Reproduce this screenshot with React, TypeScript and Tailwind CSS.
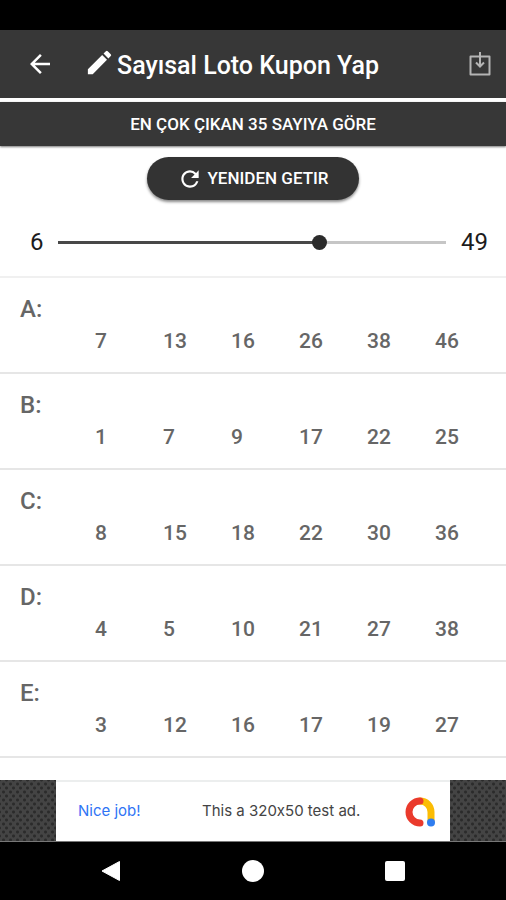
import { useState } from "react";
import { MdArrowBack, MdEdit, MdRefresh } from "react-icons/md";

const MIN = 6;
const MAX = 49;

const coupons = [
  { label: "A", numbers: [7, 13, 16, 26, 38, 46] },
  { label: "B", numbers: [1, 7, 9, 17, 22, 25] },
  { label: "C", numbers: [8, 15, 18, 22, 30, 36] },
  { label: "D", numbers: [4, 5, 10, 21, 27, 38] },
  { label: "E", numbers: [3, 12, 16, 17, 19, 27] },
];

function AppBar() {
  return (
    <header className="flex h-17 items-center bg-[#373737] pr-[14px] pl-6 text-white">
      <button type="button" aria-label="Geri" className="flex size-8 items-center justify-center">
        <MdArrowBack size={30} />
      </button>
      <h1 className="ml-7 flex flex-1 items-center gap-[2px] text-[25px] leading-9 font-medium">
        <MdEdit size={31} className="mb-1" aria-hidden="true" />
        <span className="mt-1">Sayısal Loto Kupon Yap</span>
      </h1>
      <button type="button" aria-label="Kaydet" className="text-[#b4b4b4]">
        <svg width="24" height="26" viewBox="0 0 24 26" fill="none" stroke="currentColor" strokeWidth="2">
          <path d="M2.500 5.500h19v18h-19z" strokeLinejoin="round" />
          <path d="M12 1v14M8 11.500l4 4 4-4" />
        </svg>
      </button>
    </header>
  );
}

function RangePicker({ value, onChange }: { value: number; onChange: (n: number) => void }) {
  const pct = ((value - MIN) / (MAX - MIN)) * 100;
  return (
    <div className="flex items-center border-b-2 border-[#f0f0f0] px-[18px] pt-6 pb-4 text-2xl leading-9 text-[#1c1c1c]">
      <label htmlFor="range" className="w-[33px] pl-3">{MIN}</label>
      <input
        id="range"
        type="range"
        min={MIN}
        max={MAX}
        value={value}
        onChange={(e) => onChange(Number(e.target.value))}
        className="h-4 min-w-0 flex-1 appearance-none bg-transparent bg-[length:calc(100%_-_14px)_3px] bg-center bg-no-repeat [&::-webkit-slider-thumb]:size-[15px] [&::-webkit-slider-thumb]:appearance-none [&::-webkit-slider-thumb]:rounded-full [&::-webkit-slider-thumb]:bg-[#2b2b2b]"
        style={{ backgroundImage: `linear-gradient(to right, #484848 ${pct}%, #c6c6c6 ${pct}%)` }}
      />
      <output htmlFor="range" className="w-[35px] pl-2">{MAX}</output>
    </div>
  );
}

function AdMobLogo() {
  return (
    <svg width="32" height="32" viewBox="0 0 32 32" fill="none" strokeWidth="7" strokeLinecap="round" aria-hidden="true">
      <path d="M16 5c6.200 0 11 4.800 11 11v9" stroke="#fbbc04" />
      <path d="M16 5a11 11 0 1 0 0 22" stroke="#ea3a2c" />
      <circle cx="27" cy="26.500" r="4" fill="#2f7df0" />
    </svg>
  );
}

function AdBanner() {
  return (
    <aside className="flex h-[62px] justify-center border-b border-[#777] bg-[#444] bg-[radial-gradient(circle,#2b2b2b_1px,transparent_2px),radial-gradient(circle,#2b2b2b_1px,transparent_2px)] bg-[length:7px_8px] bg-[position:0_0,3px_4px]">
      <a
        href="#ad"
        className="flex w-[394px] items-center border-t-2 border-[#eceeee] bg-white pr-[14px] pl-[22px] font-['Inter','Roboto',sans-serif] text-[15px] [font-feature-settings:'calt'_0]"
      >
        <span className="w-31 text-[#2f74f5]">Nice job!</span>
        <span className="flex-1 text-[#444]">This a 320x50 test ad.</span>
        <AdMobLogo />
      </a>
    </aside>
  );
}

function NavBar() {
  return (
    <nav className="flex h-[58px] items-center justify-center gap-[120px] bg-black text-white">
      <button type="button" aria-label="Geri">
        <svg width="22" height="22" viewBox="0 0 22 22" fill="currentColor" stroke="currentColor" strokeLinejoin="round">
          <path d="M19.500 1.500v19L2 11z" />
        </svg>
      </button>
      <button type="button" aria-label="Ana ekran" className="size-[22px] rounded-full bg-white" />
      <button type="button" aria-label="Son uygulamalar" className="flex size-[22px] items-center justify-center">
        <span className="size-5 rounded-xs bg-white" />
      </button>
    </nav>
  );
}

export default function App() {
  const [value, setValue] = useState(35);
  return (
    <div className="flex min-h-screen flex-col bg-white font-['Roboto','Noto_Sans',sans-serif]">
      <div className="h-[30px] bg-black" />
      <AppBar />
      <main className="flex flex-1 flex-col">
        <h2 className="mt-1 bg-[#373737] text-center text-[17px] leading-[44px] font-medium text-white shadow-[0_1px_2px_#0008]">
          EN ÇOK ÇIKAN {value} SAYIYA GÖRE
        </h2>
        <button
          type="button"
          className="mx-auto mt-[11px] flex h-[43px] items-center gap-1 rounded-full bg-[#333] px-[30px] text-[17px] font-medium text-white shadow-[0_2px_3px_#0007]"
        >
          <MdRefresh size={26} aria-hidden="true" />
          YENIDEN GETIR
        </button>
        <RangePicker value={value} onChange={setValue} />
        <ul>
          {coupons.map((c) => (
            <li key={c.label} className="border-b-2 border-[#e6e6e6] pt-4 pb-[14px] pl-5 font-medium text-[#666]">
              <h3 className="text-2xl leading-[30px]">{c.label}:</h3>
              <div className="grid grid-cols-6 pr-[3px] pl-[75px] text-[21px] leading-[34px]">
                {c.numbers.map((n) => (
                  <span key={n}>{n}</span>
                ))}
              </div>
            </li>
          ))}
        </ul>
      </main>
      <AdBanner />
      <NavBar />
    </div>
  );
}
